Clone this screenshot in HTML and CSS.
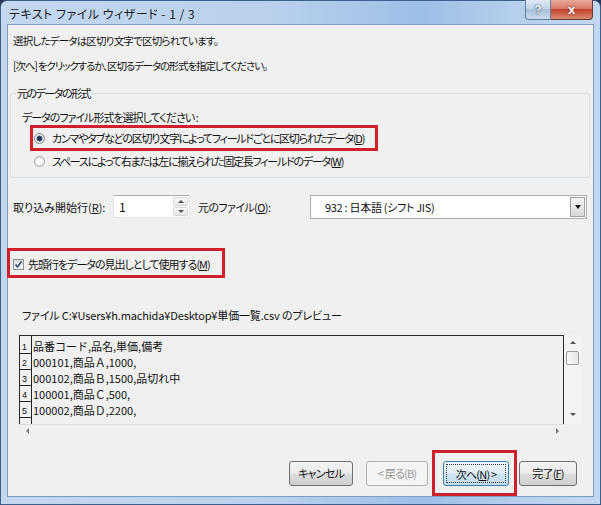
FILE: index.html
```html
<!DOCTYPE html>
<html lang="ja">
<head>
    <meta charset="UTF-8">
    <title>テキスト ファイル ウィザード - 1 / 3</title>
    <link rel="stylesheet" href="styles.css">
</head>
<body>
    <div class="window">
        <!-- タイトルバー -->
        <div class="titlebar">
            <span class="title">テキスト ファイル ウィザード - 1 / 3</span>
            <div class="caption-btns">
                <span class="cap-btn help">?</span>
                <span class="cap-btn close">x</span>
            </div>
        </div>

        <div class="client">
            <p class="msg first">選択したデータは区切り文字で区切られています。</p>
            <p class="msg second">[次へ] をクリックするか、区切るデータの形式を指定してください。</p>

            <!-- 元のデータの形式 -->
            <fieldset class="group">
                <legend>元のデータの形式</legend>
                <p class="group-label">データのファイル形式を選択してください :</p>
                <div class="mark radio-mark">
                    <label class="radio"><span class="radio-dot checked"></span>カンマやタブなどの区切り文字によってフィールドごとに区切られたデータ(<u>D</u>)</label>
                </div>
                <label class="radio second"><span class="radio-dot"></span>スペースによって右または左に揃えられた固定長フィールドのデータ(<u>W</u>)</label>
            </fieldset>

            <div class="import-row">
                <span class="start-label">取り込み開始行(<u>R</u>):</span>
                <div class="spin">
                    <span class="spin-val">1</span>
                    <span class="spin-btns">
                        <span class="spin-btn"><i class="arrow-up"></i></span>
                        <span class="spin-btn"><i class="arrow-down"></i></span>
                    </span>
                </div>
                <span class="origin-label">元のファイル(<u>O</u>):</span>
                <div class="select">
                    <span class="select-val">932 : 日本語 (シフト JIS)</span>
                    <span class="select-btn"><i class="arrow-down"></i></span>
                </div>
            </div>

            <div class="mark check-mark">
                <label class="check">
                    <span class="check-box">
                        <svg width="9" height="9" viewBox="0 0 9 9"><path d="M1.5 4.5 L3.5 7 L7.5 1.5" fill="none" stroke="#2b4a78" stroke-width="1.6"/></svg>
                    </span>先頭行をデータの見出しとして使用する(<u>M</u>)
                </label>
            </div>

            <!-- プレビュー -->
            <p class="preview-label">ファイル C:¥Users¥h.machida¥Desktop¥単価一覧.csv のプレビュー</p>
            <div class="preview">
                <div class="preview-main">
                    <div class="preview-box">
                        <div class="row first-row"><span class="num">1</span><span class="cell">品番コード,品名,単価,備考</span></div>
                        <div class="row"><span class="num">2</span><span class="cell">000101,商品Ａ,1000,</span></div>
                        <div class="row"><span class="num">3</span><span class="cell">000102,商品Ｂ,1500,品切れ中</span></div>
                        <div class="row"><span class="num">4</span><span class="cell">100001,商品Ｃ,500,</span></div>
                        <div class="row"><span class="num">5</span><span class="cell">100002,商品Ｄ,2200,</span></div>
                        <div class="row filler"><span class="num"></span></div>
                    </div>
                    <div class="vscroll">
                        <i class="arrow-up"></i>
                        <span class="thumb"></span>
                        <i class="arrow-down last"></i>
                    </div>
                </div>
                <div class="hscroll">
                    <i class="arrow-left"></i>
                    <i class="arrow-right"></i>
                </div>
            </div>

            <!-- ボタン -->
            <div class="footer">
                <button class="btn cancel">キャンセル</button>
                <button class="btn back" disabled>&lt; 戻る(B)</button>
                <div class="mark next-mark">
                    <button class="btn next"><span class="focus">次へ(<u>N</u>) &gt;</span></button>
                </div>
                <button class="btn finish">完了(<u>F</u>)</button>
            </div>
        </div>
    </div>
</body>
</html>
```

FILE: styles.css
```css
* {
    margin: 0;
    padding: 0;
    box-sizing: border-box;
}

body {
    width: 601px;
    height: 505px;
    overflow: hidden;
    background-color: #23395a;
    font-family: "Noto Sans CJK JP", "Noto Sans", sans-serif;
    font-size: 11px;
    letter-spacing: -1px;
    font-feature-settings: "palt";
    color: #111;
}

u {
    text-decoration: underline;
    text-underline-offset: 1px;
}

/* ウィンドウ枠 */
.window {
    width: 601px;
    height: 505px;
    display: flex;
    flex-direction: column;
    border: 1px solid #3d5f8c;
    border-radius: 7px 7px 0 0;
    padding: 0 6px 7px 6px;
    background: linear-gradient(to right, #c3d8ef 0%, #b9d1ed 45%, #9cbfe6 70%, #b5cfec 86%, #c2d8ef 100%);
}

.titlebar {
    height: 27px;
    display: flex;
    align-items: center;
}

.title {
    margin-left: 2px;
    margin-top: 2px;
    font-size: 12px;
    letter-spacing: 0.5px;
    color: #1b1b1b;
}

.caption-btns {
    display: flex;
    align-self: flex-start;
    margin-left: auto;
    margin-top: -1px;
    margin-right: 1px;
}

.cap-btn {
    height: 20px;
    display: flex;
    align-items: center;
    justify-content: center;
    color: #fff;
    font-family: "Liberation Sans", sans-serif;
    font-weight: bold;
    letter-spacing: 0;
}

.help {
    width: 26px;
    border: 1px solid #5f7da3;
    border-top: none;
    border-radius: 0 0 0 4px;
    background: linear-gradient(#dfeaf6, #c2d5ea 45%, #a8bfdb 50%, #c9daed);
    font-size: 12px;
    text-shadow: 0 0 2px #2d4466, 0 0 1px #2d4466;
}

.close {
    width: 42px;
    border: 1px solid #6b3a35;
    border-top: none;
    border-left: none;
    border-radius: 0 0 4px 0;
    background: linear-gradient(#e9aa9a, #d77a68 45%, #c5412b 50%, #d98a74);
    font-size: 13px;
    text-shadow: 0 0 2px #5a1a12;
}

/* 本体 */
.client {
    flex: 1;
    display: flex;
    flex-direction: column;
    background-color: #f0f0f0;
    border: 1px solid #7e9dc5;
}

.msg {
    margin-left: 5px;
    line-height: 16px;
    margin-top: 9px;
    font-size: 10.5px;
    letter-spacing: -0.8px;
}

.msg.first {
    margin-top: 8px;
}

.msg.second {
    letter-spacing: -1.15px;
}

.group {
    margin: 11px 0 0 2px;
    width: 580px;
    border: 1px solid #d5dfe5;
    border-radius: 3px;
    padding: 9px 11px 8px 11px;
}

.group legend {
    margin-left: -6px;
    padding: 0 1px;
    line-height: 16px;
    letter-spacing: -1.5px;
}

.group-label {
    line-height: 15px;
}

.mark {
    border: 3px solid #d21f2c;
}

.radio-mark {
    width: fit-content;
    margin-left: 8px;
    padding: 2px 11px 2px 1px;
}

.radio {
    display: flex;
    align-items: center;
    line-height: 16px;
    white-space: nowrap;
    letter-spacing: -1.25px;
}

.radio.second {
    margin: 2px 0 0 12px;
}

.radio-dot {
    flex-shrink: 0;
    width: 11px;
    height: 11px;
    border-radius: 50%;
    border: 1px solid #a0a0a0;
    background: radial-gradient(circle, #fafafa 0 3px, #e4e4e4 5px);
    margin-right: 7px;
}

.radio-dot.checked {
    border-color: #8a8a8a;
    background: radial-gradient(circle, #1e3552 0 1.8px, #5c7898 2.8px, #f3f3f3 3.3px, #dcdcdc 5px);
}

/* 取り込み開始行 */
.import-row {
    margin: 17px 0 0 5px;
    height: 23px;
    display: flex;
    align-items: center;
    white-space: nowrap;
}

.start-label {
    width: 100px;
    letter-spacing: 0;
}

.spin {
    width: 77px;
    height: 23px;
    display: flex;
    border: 1px solid #abadb3;
    border-color: #abadb3 #e2e3ea #e3e9ef #e2e3ea;
    background-color: #fff;
}

.spin-val {
    flex: 1;
    padding-left: 5px;
    line-height: 21px;
    font-size: 12px;
}

.spin-btns {
    width: 16px;
    display: flex;
    flex-direction: column;
    gap: 1px;
    padding: 1px 1px 1px 0;
}

.spin-btn {
    flex: 1;
    display: flex;
    align-items: center;
    justify-content: center;
    border: 1px solid #d6d6d6;
    border-radius: 2px;
    background: linear-gradient(#f7f7f7, #e9e9e9);
}

.arrow-up, .arrow-down, .arrow-left, .arrow-right {
    display: block;
    width: 0;
    height: 0;
}

.arrow-up {
    border-left: 3px solid transparent;
    border-right: 3px solid transparent;
    border-bottom: 3px solid #555;
}

.arrow-down {
    border-left: 3px solid transparent;
    border-right: 3px solid transparent;
    border-top: 3px solid #555;
}

.arrow-left {
    border-top: 3px solid transparent;
    border-bottom: 3px solid transparent;
    border-right: 3px solid #777;
}

.arrow-right {
    border-top: 3px solid transparent;
    border-bottom: 3px solid transparent;
    border-left: 3px solid #777;
}

.origin-label {
    margin-left: 8px;
    width: 112px;
    letter-spacing: -0.6px;
}

.select {
    width: 277px;
    height: 24px;
    display: flex;
    align-items: center;
    border: 1px solid #a9abb2;
    background-color: #fff;
}

.select-val {
    padding-left: 14px;
    letter-spacing: -0.3px;
}

.select-btn {
    margin-left: auto;
    margin-right: 1px;
    width: 15px;
    height: 20px;
    display: flex;
    align-items: center;
    justify-content: center;
    border: 1px solid #9d9d9d;
    background: linear-gradient(#f4f4f4, #dadada);
}

.select-btn .arrow-down {
    border-top-color: #111;
    border-width: 4px 3px 0 3px;
}

/* 見出しチェック */
.check-mark {
    width: fit-content;
    margin: 30px 0 0 -1px;
    padding: 5px 12px 3px 3px;
}

.check {
    display: flex;
    align-items: center;
    line-height: 16px;
    white-space: nowrap;
}

.check-box {
    flex-shrink: 0;
    width: 11px;
    height: 11px;
    margin-right: 4px;
    display: flex;
    align-items: center;
    justify-content: center;
    border: 1px solid #8e8f8f;
    background: linear-gradient(#dcdcdc, #fbfbfb);
}

/* プレビュー */
.preview-label {
    margin: 29px 0 0 14px;
    line-height: 16px;
    letter-spacing: -0.15px;
}

.preview {
    margin: 12px 0 0 11px;
    width: 562px;
}

.preview-main {
    display: flex;
    height: 89px;
}

.preview-box {
    width: 545px;
    display: flex;
    flex-direction: column;
    border: 1px solid #2a2a2a;
    border-bottom: none;
    font-feature-settings: normal;
}

.row {
    height: 16px;
    display: flex;
    align-items: flex-end;
}

.row.first-row {
    height: 18px;
}

.row.filler {
    flex: 1;
}

.num {
    width: 12px;
    height: 100%;
    padding-left: 2px;
    border-right: 1px solid #222;
    border-bottom: 1px solid #222;
    font-family: "Liberation Sans", sans-serif;
    font-size: 9px;
    letter-spacing: 0;
    line-height: 12px;
    display: flex;
    align-items: flex-end;
}

.filler .num {
    border-bottom: none;
}

.cell {
    padding-left: 1px;
    font-size: 11px;
    line-height: 15px;
    letter-spacing: 0;
    white-space: nowrap;
}

.vscroll {
    width: 17px;
    display: flex;
    flex-direction: column;
    align-items: center;
    padding: 6px 0 8px 0;
    background-color: #f3f3f3;
}

.thumb {
    margin-top: 7px;
    width: 13px;
    height: 14px;
    border: 1px solid #9b9b9b;
    border-radius: 2px;
    background: linear-gradient(to right, #f9f9f9, #e6e6e6);
}

.vscroll .arrow-down.last {
    margin-top: auto;
}

.hscroll {
    width: 545px;
    height: 12px;
    display: flex;
    align-items: center;
    justify-content: space-between;
    padding: 0 5px 0 7px;
    border-top: 1px solid #dedede;
}

/* ボタン */
.footer {
    margin-top: 14px;
    padding-right: 16px;
    display: flex;
    justify-content: flex-end;
    align-items: center;
}

.btn {
    height: 25px;
    font-family: inherit;
    font-size: 11px;
    letter-spacing: -0.8px;
    font-feature-settings: "palt";
    color: #111;
    border: 1px solid #707070;
    border-radius: 3px;
    background: linear-gradient(#f3f3f3, #ebebeb 48%, #dddddd 52%, #cfcfcf);
}

.cancel {
    width: 64px;
}

.back {
    width: 62px;
    margin-left: 13px;
    margin-right: 4px;
    color: #9a9a9a;
    border-color: #adb2b5;
    background: #f4f4f4;
}

.next-mark {
    padding: 8px 5px 7px 8px;
}

.next {
    width: 66px;
    display: flex;
    padding: 2px;
    border-color: #3c7fb1;
    background: linear-gradient(#eef6fb, #e1eef7 48%, #cfe4f2 52%, #c2dcee);
}

.focus {
    flex: 1;
    display: flex;
    align-items: center;
    justify-content: center;
    border: 1px dotted #333;
}

.finish {
    width: 58px;
    margin-left: 2px;
}
```
